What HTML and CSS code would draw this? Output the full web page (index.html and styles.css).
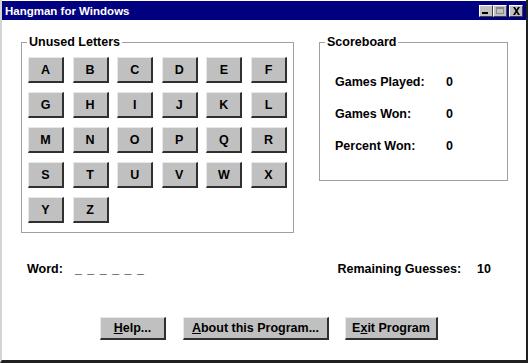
FILE: index.html
```html
<!DOCTYPE html>
<html lang="en">
<head>
    <meta charset="UTF-8">
    <title>Hangman for Windows</title>
    <link rel="stylesheet" href="styles.css">
</head>
<body>

<div class="window">
    <div class="titlebar">
        <span class="title">Hangman for Windows</span>
        <div class="caption-buttons">
            <span class="cap-btn"><span class="min-bar"></span></span>
            <span class="cap-btn cap-max"><span class="max-box"></span></span>
            <span class="cap-btn cap-close">
                <svg width="9" height="8" viewBox="0 0 9 8"><path d="M1 0h2l1.5 2.5L6 0h2L5.5 4 8 8H6L4.5 5.5 3 8H1l2.5-4z" fill="#000"/></svg>
            </span>
        </div>
    </div>

    <div class="content">
        <div class="top-row">
            <fieldset class="group letters">
                <legend>Unused Letters</legend>
                <div class="letter-grid">
                    <button class="btn letter">A</button>
                    <button class="btn letter">B</button>
                    <button class="btn letter">C</button>
                    <button class="btn letter">D</button>
                    <button class="btn letter">E</button>
                    <button class="btn letter">F</button>
                    <button class="btn letter">G</button>
                    <button class="btn letter">H</button>
                    <button class="btn letter">I</button>
                    <button class="btn letter">J</button>
                    <button class="btn letter">K</button>
                    <button class="btn letter">L</button>
                    <button class="btn letter">M</button>
                    <button class="btn letter">N</button>
                    <button class="btn letter">O</button>
                    <button class="btn letter">P</button>
                    <button class="btn letter">Q</button>
                    <button class="btn letter">R</button>
                    <button class="btn letter">S</button>
                    <button class="btn letter">T</button>
                    <button class="btn letter">U</button>
                    <button class="btn letter">V</button>
                    <button class="btn letter">W</button>
                    <button class="btn letter">X</button>
                    <button class="btn letter">Y</button>
                    <button class="btn letter">Z</button>
                </div>
            </fieldset>

            <fieldset class="group scoreboard">
                <legend>Scoreboard</legend>
                <div class="score-list">
                    <div class="score-row"><span class="score-label">Games Played:</span><span>0</span></div>
                    <div class="score-row"><span class="score-label">Games Won:</span><span>0</span></div>
                    <div class="score-row"><span class="score-label">Percent Won:</span><span>0</span></div>
                </div>
            </fieldset>
        </div>

        <div class="status-row">
            <div class="word">Word:<span class="blanks">_ _ _ _ _ _</span></div>
            <div class="guesses">Remaining Guesses:<span class="guess-count">10</span></div>
        </div>

        <div class="bottom-row">
            <button class="btn wide help"><u>H</u>elp...</button>
            <button class="btn wide about"><u>A</u>bout this Program...</button>
            <button class="btn wide exit">E<u>x</u>it Program</button>
        </div>
    </div>
</div>

</body>
</html>
```

FILE: styles.css
```css
body {
    margin: 0;
    background: #ffffff;
    font-family: "Liberation Sans", Arial, sans-serif;
    font-size: 12.5px;
    font-weight: bold;
    color: #000000;
}
.window {
    width: 528px;
    height: 363px;
    box-sizing: border-box;
    border-left: 2px solid #d4d4d4;
    border-right: 2px solid #202020;
    border-bottom: 3px solid #202020;
    background: #ffffff;
    overflow: hidden;
}
.titlebar {
    height: 19px;
    background: #000080;
    display: flex;
    align-items: center;
    justify-content: space-between;
    padding: 0 3px 0 3px;
    margin-top: 1px;
}
.title {
    color: #ffffff;
    font-size: 11.5px;
}
.caption-buttons {
    display: flex;
}
.cap-btn {
    width: 14px;
    height: 12px;
    box-sizing: border-box;
    background: #c0c0c0;
    border-top: 1px solid #ffffff;
    border-left: 1px solid #ffffff;
    border-right: 1px solid #404040;
    border-bottom: 1px solid #404040;
    display: flex;
    align-items: center;
    justify-content: center;
}
.cap-close {
    margin-left: 2px;
}
.min-bar {
    width: 6px;
    height: 2px;
    background: #000000;
    margin-top: 5px;
    margin-left: -2px;
}
.max-box {
    width: 8px;
    height: 7px;
    box-sizing: border-box;
    border: 1px solid #8a8a8a;
    border-top-width: 2px;
}
.content {
    padding: 0 0 0 19px;
}
.top-row {
    display: flex;
    align-items: flex-start;
    margin-top: 15px;
}
.group {
    margin: 0;
    border: 1px solid #a0a0a0;
    padding: 0;
}
.group legend {
    padding: 0 2px;
    margin-left: 5px;
    line-height: 14px;
}
.letters {
    width: 273px;
    height: 198px;
    box-sizing: border-box;
}
.letter-grid {
    display: grid;
    grid-template-columns: repeat(6, 36px);
    grid-auto-rows: 26px;
    column-gap: 8.6px;
    row-gap: 9px;
    padding: 8px 0 0 6px;
}
.btn {
    font-family: "Liberation Sans", Arial, sans-serif;
    font-weight: bold;
    font-size: 12.5px;
    color: #000000;
    background: #c0c0c0;
    border-top: 1px solid #e8e8e8;
    border-left: 1px solid #e8e8e8;
    border-right: 2px solid #303030;
    border-bottom: 2px solid #303030;
    padding: 0;
    box-sizing: border-box;
    cursor: pointer;
}
.letter {
    width: 36px;
    height: 26px;
}
.scoreboard {
    width: 189px;
    height: 146px;
    box-sizing: border-box;
    margin-left: 25px;
}
.score-list {
    padding: 26px 0 0 15px;
}
.score-row {
    display: flex;
    height: 32px;
    line-height: 14px;
}
.score-label {
    width: 111px;
}
.status-row {
    display: flex;
    justify-content: space-between;
    margin-top: 29px;
    padding: 0 35px 0 6px;
}
.blanks {
    margin-left: 12px;
    letter-spacing: 1px;
}
.guess-count {
    margin-left: 16px;
}
.bottom-row {
    display: flex;
    margin-top: 41px;
    padding-left: 79px;
}
.wide {
    height: 23px;
}
.help {
    width: 66px;
}
.about {
    width: 146px;
    margin-left: 17px;
}
.exit {
    width: 93px;
    margin-left: 16px;
}
```
